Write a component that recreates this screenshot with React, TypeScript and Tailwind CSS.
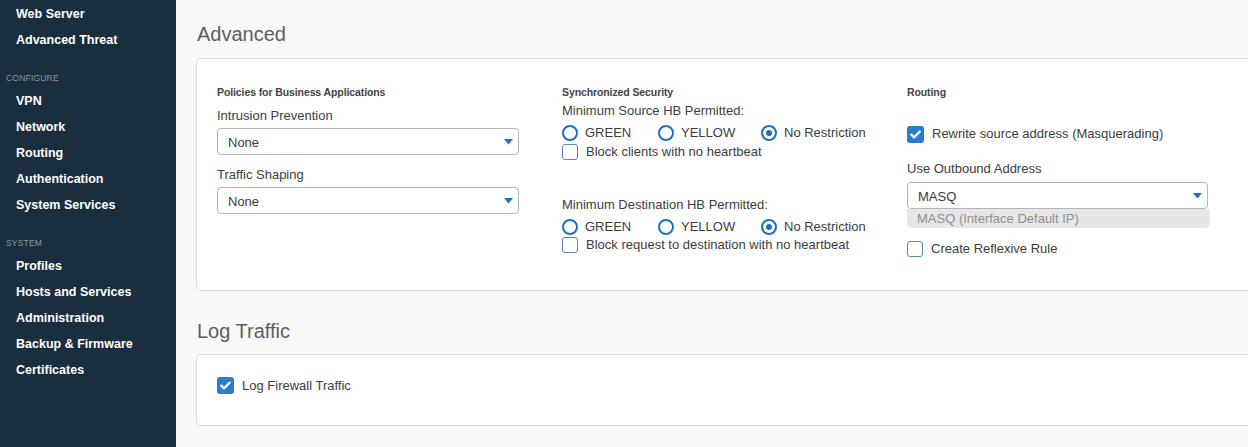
import React from "react";

const FONT = { fontFamily: '"Liberation Sans", Arial, sans-serif' };

function Caret() {
  return (
    <svg width="9" height="6" viewBox="0 0 9 6" className="shrink-0">
      <path d="M0 0 L9 0 L4.5 5.5 Z" fill="#1b73c8" />
    </svg>
  );
}

function Select({ value, w }: { value: string; w: string }) {
  return (
    <div
      className={`${w} h-[27px] border border-[#b3b7bc] rounded-[4px] bg-white flex items-center justify-between pl-[10px] pr-[5px]`}
    >
      <span className="text-[13px] text-[#3d3d3d] pt-[2px]">{value}</span>
      <Caret />
    </div>
  );
}

function Checkbox({ checked }: { checked?: boolean }) {
  if (checked) {
    return (
      <div className="w-[17px] h-[17px] rounded-[3px] bg-[#2a7dce] flex items-center justify-center shrink-0">
        <svg width="11" height="9" viewBox="0 0 11 9">
          <path d="M1.3 4.6 L4.2 7.3 L9.7 1.6" stroke="white" strokeWidth="2.3" fill="none" strokeLinecap="round" strokeLinejoin="round" />
        </svg>
      </div>
    );
  }
  return <div className="w-[16px] h-[16px] rounded-[3px] border-[1.5px] border-[#5d83b3] bg-white shrink-0" />;
}

function Radio({ checked, label, w }: { checked?: boolean; label: string; w: string }) {
  return (
    <div className={`${w} flex items-center gap-[7px]`}>
      <div className="w-[16px] h-[16px] rounded-full border-[2px] border-[#1f6fc1] flex items-center justify-center shrink-0">
        {checked && <div className="w-[6px] h-[6px] rounded-full bg-[#1f6fc1]" />}
      </div>
      <span className="text-[13px] text-[#3d3d3d]">{label}</span>
    </div>
  );
}

function RadioRow() {
  return (
    <div className="flex items-center h-[18px]">
      <Radio label="GREEN" w="w-[96px]" />
      <Radio label="YELLOW" w="w-[103px]" />
      <Radio label="No Restriction" checked w="w-[120px]" />
    </div>
  );
}

function SideItem({ label }: { label: string }) {
  return (
    <div className="h-[26px] flex items-center pl-[16px] text-[12.5px] font-bold text-white">{label}</div>
  );
}

function SideSection({ label }: { label: string }) {
  return (
    <div className="pt-[18px] mb-[3px] h-[32px] flex items-start">
      <div className="h-[14px] flex items-center pl-[6px] text-[8.5px] tracking-[0.2px] text-[#8896a2] uppercase">{label}</div>
    </div>
  );
}

export default function App() {
  return (
    <div className="w-[1248px] h-[447px] flex overflow-hidden bg-[#f8f8f8]" style={FONT}>
      <div className="w-[176px] h-full bg-[#1a2e3d] shrink-0 flex flex-col pt-[1px]">
        <SideItem label="Web Server" />
        <SideItem label="Advanced Threat" />
        <SideSection label="Configure" />
        <SideItem label="VPN" />
        <SideItem label="Network" />
        <SideItem label="Routing" />
        <SideItem label="Authentication" />
        <SideItem label="System Services" />
        <SideSection label="System" />
        <SideItem label="Profiles" />
        <SideItem label="Hosts and Services" />
        <SideItem label="Administration" />
        <SideItem label="Backup &amp; Firmware" />
        <SideItem label="Certificates" />
      </div>

      <div className="flex-1 overflow-hidden pl-[20px] flex flex-col">
        <div className="pt-[20px] h-[28px] box-content flex items-center pl-[1px] text-[20px] text-[#5a5f64] mb-[10px]">
          Advanced
        </div>
        <div className="w-[1100px] h-[233px] shrink-0 bg-white border border-[#dcdcdc] rounded-[5px] pt-[27px] pl-[20px] flex text-[#3d3d3d]">
          <div className="w-[345px] flex flex-col">
            <div className="h-[14px] flex items-center text-[10.5px] font-bold text-[#444] tracking-[-0.1px]">Policies for Business Applications</div>
            <div className="mt-[7px] h-[18px] flex items-center text-[13px]">Intrusion Prevention</div>
            <div className="mt-[3px]">
              <Select value="None" w="w-[302px]" />
            </div>
            <div className="mt-[11px] h-[18px] flex items-center text-[13px]">Traffic Shaping</div>
            <div className="mt-[3px]">
              <Select value="None" w="w-[302px]" />
            </div>
          </div>

          <div className="w-[345px] flex flex-col">
            <div className="h-[14px] flex items-center text-[10.5px] font-bold text-[#444] tracking-[-0.1px]">Synchronized Security</div>
            <div className="mt-[2px] h-[18px] flex items-center text-[13px]">Minimum Source HB Permitted:</div>
            <div className="mt-[4px]"><RadioRow /></div>
            <div className="mt-[1px] h-[18px] flex items-center gap-[8px]">
              <Checkbox />
              <span className="text-[13px]">Block clients with no heartbeat</span>
            </div>
            <div className="mt-[35px] h-[18px] flex items-center text-[13px]">Minimum Destination HB Permitted:</div>
            <div className="mt-[4px]"><RadioRow /></div>
            <div className="mt-[0px] h-[18px] flex items-center gap-[8px]">
              <Checkbox />
              <span className="text-[13px]">Block request to destination with no heartbeat</span>
            </div>
          </div>

          <div className="w-[345px] flex flex-col">
            <div className="h-[14px] flex items-center text-[10.5px] font-bold text-[#444] tracking-[-0.1px]">Routing</div>
            <div className="mt-[25px] h-[18px] flex items-center gap-[8px]">
              <Checkbox checked />
              <span className="text-[13px]">Rewrite source address (Masquerading)</span>
            </div>
            <div className="mt-[17px] h-[18px] flex items-center text-[13px]">Use Outbound Address</div>
            <div className="mt-[4px]">
              <Select value="MASQ" w="w-[301px]" />
            </div>
            <div className="w-[303px] h-[19px] bg-[#e6e6e6] rounded-b-[5px] flex items-center pl-[10px] text-[13px] text-[#8f8f8f]">
              MASQ (Interface Default IP)
            </div>
            <div className="mt-[12px] h-[18px] flex items-center gap-[8px]">
              <Checkbox />
              <span className="text-[13px]">Create Reflexive Rule</span>
            </div>
          </div>
        </div>

        <div className="mt-[26px] h-[28px] flex items-center pl-[1px] text-[20px] text-[#5a5f64] mb-[9px]">
          Log Traffic
        </div>
        <div className="w-[1100px] h-[72px] shrink-0 bg-white border border-[#dcdcdc] rounded-[5px] pt-[22px] pl-[20px] text-[#3d3d3d]">
          <div className="h-[17px] flex items-center gap-[8px]">
            <Checkbox checked />
            <span className="text-[13px]">Log Firewall Traffic</span>
          </div>
        </div>
      </div>
    </div>
  );
}
